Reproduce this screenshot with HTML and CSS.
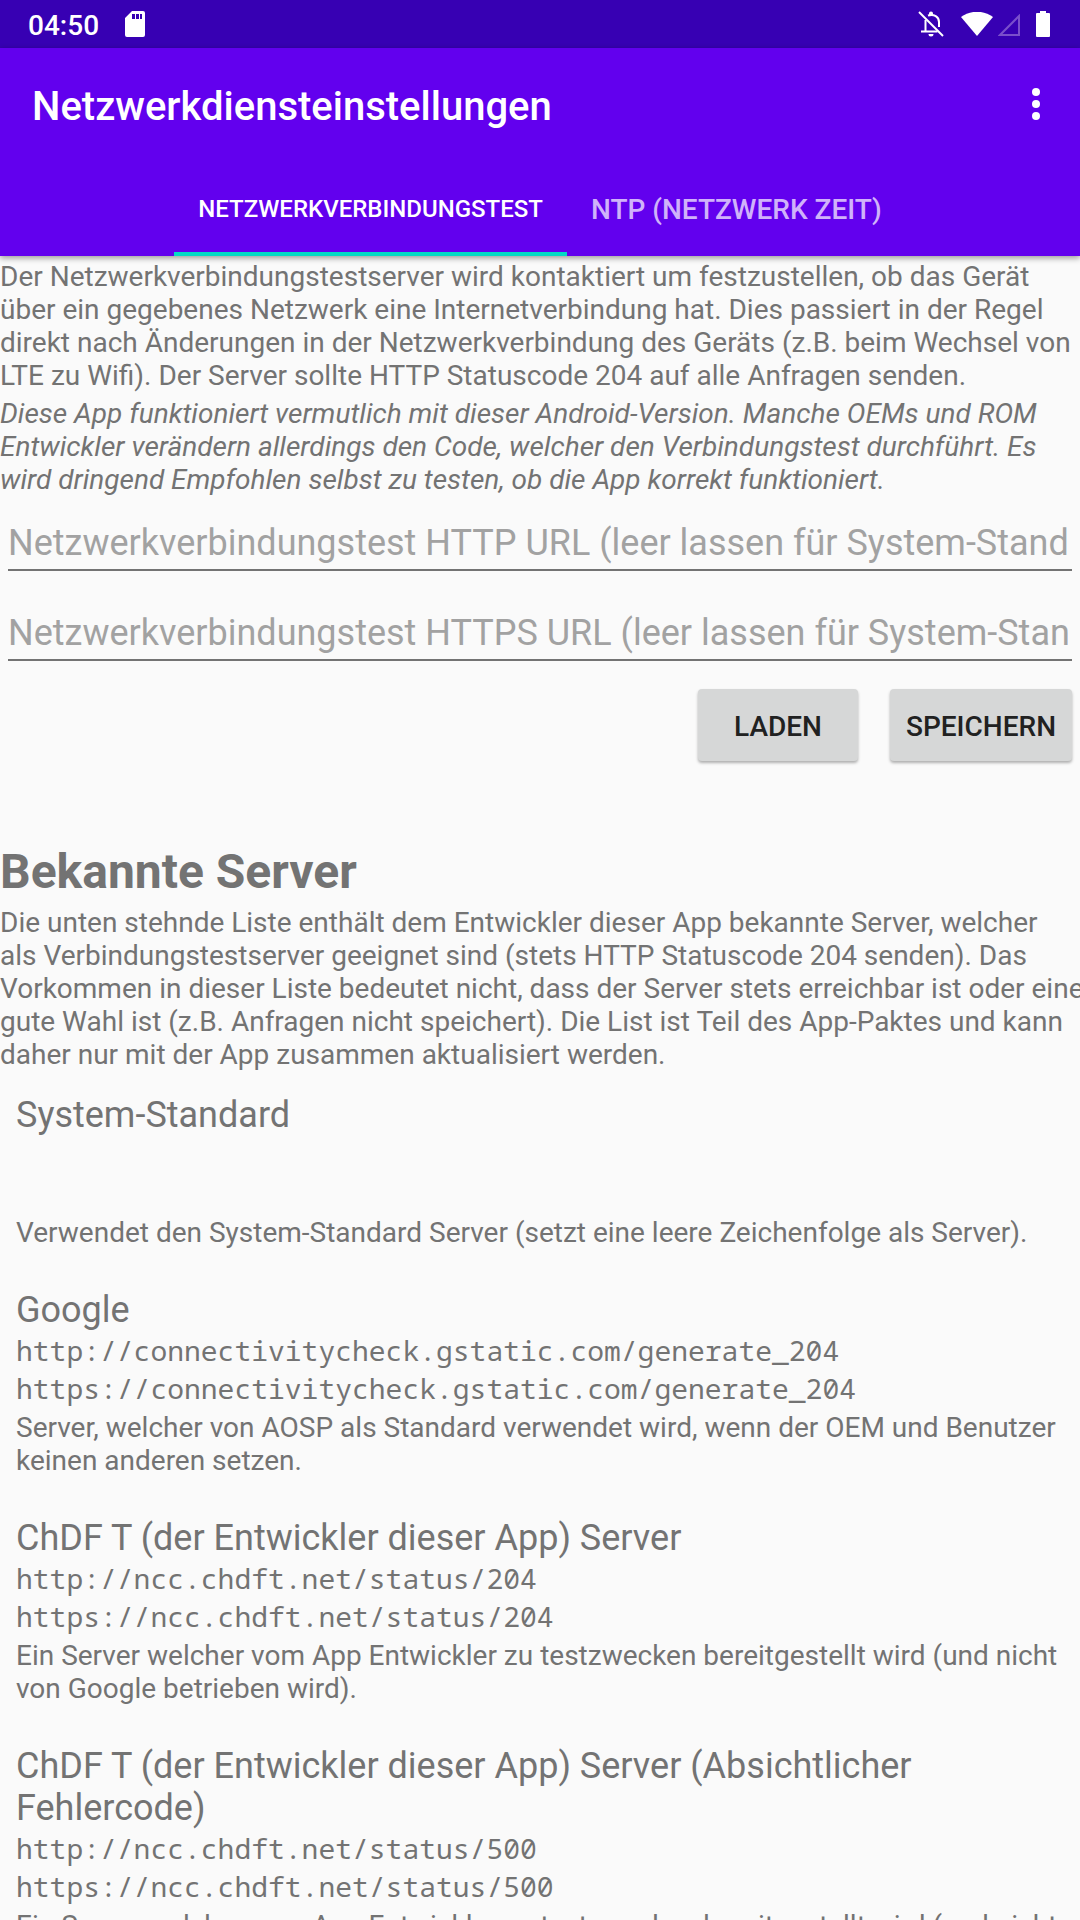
FILE: index.html
```html
<!DOCTYPE html>
<html lang="de">
<head>
<meta charset="utf-8">
<meta name="viewport" content="width=device-width, initial-scale=1">
<title>Netzwerkdiensteinstellungen</title>
<link rel="stylesheet" href="styles.css">
</head>
<body>
<div class="screen">
  <div class="status-bar">
    <span class="clock">04:50</span>
    <svg class="sd-icon" viewBox="0 0 20 26"><path fill="#fff" fill-rule="evenodd" d="M7 0H18Q20 0 20 2V24Q20 26 18 26H2Q0 26 0 24V7ZM7 3V8H10V3ZM11 3V8H14V3ZM15 3V8H17V3Z"/></svg>
    <div class="status-icons">
      <svg class="bell-icon" viewBox="0 0 26 26"><g fill="none" stroke="#fff" stroke-width="2"><path d="M1 1 25 25"/><path d="M7.500 9V20M3 20.500H19.500"/><path d="M10 4.500C16 2.500 21 6 21 11V16"/></g><path fill="#fff" d="M11 4V2.500A2 2 0 0 1 15 2.500V4ZM10.500 23H15.500A2.500 2.500 0 0 1 10.500 23Z"/></svg>
      <svg class="wifi-icon" viewBox="0 0 32 24"><path fill="#fff" d="M16 24 0 5C9-2 23-2 32 5Z"/></svg>
      <svg class="signal-icon" viewBox="0 0 22 22"><path fill="none" stroke="#7a4fcb" stroke-width="2" d="M21 2V21H2Z"/></svg>
      <svg class="battery-icon" viewBox="0 0 14 26"><path fill="#fff" d="M4 0H10V2H13Q14 2 14 3V25Q14 26 13 26H1Q0 26 0 25V3Q0 2 1 2H4Z"/></svg>
    </div>
  </div>
  <header class="app-bar">
    <div class="toolbar">
      <h1 class="title">Netzwerkdiensteinstellungen</h1>
      <button class="overflow" type="button" aria-label="Weitere Optionen"><svg viewBox="0 0 8 32"><g fill="#fff"><circle cx="4" cy="4" r="4"/><circle cx="4" cy="16" r="4"/><circle cx="4" cy="28" r="4"/></g></svg></button>
    </div>
    <nav class="tabs">
      <button class="tab tab-active" type="button">NETZWERKVERBINDUNGSTEST</button>
      <button class="tab" type="button">NTP (NETZWERK ZEIT)</button>
    </nav>
  </header>
  <main class="content">
    <p class="body-text">Der Netzwerkverbindungstestserver wird kontaktiert um festzustellen, ob das Gerät über ein gegebenes Netzwerk eine Internetverbindung hat. Dies passiert in der Regel direkt nach Änderungen in der Netzwerkverbindung des Geräts (z.B. beim Wechsel von LTE zu Wifi). Der Server sollte HTTP Statuscode 204 auf alle Anfragen senden.</p>
    <p class="body-text note">Diese App funktioniert vermutlich mit dieser Android-Version. Manche OEMs und ROM Entwickler verändern allerdings den Code, welcher den Verbindungstest durchführt. Es wird dringend Empfohlen selbst zu testen, ob die App korrekt funktioniert.</p>
    <form class="url-form">
      <input class="url-input" type="text" aria-label="HTTP URL" placeholder="Netzwerkverbindungstest HTTP URL (leer lassen für System-Standard)">
      <input class="url-input" type="text" aria-label="HTTPS URL" placeholder="Netzwerkverbindungstest HTTPS URL (leer lassen für System-Standard)">
      <div class="actions">
        <button class="action" type="button">LADEN</button>
        <button class="action" type="button">SPEICHERN</button>
      </div>
    </form>
    <h2 class="section-title">Bekannte Server</h2>
    <p class="body-text intro">Die unten stehnde Liste enthält dem Entwickler dieser App bekannte Server, welcher<br>als Verbindungstestserver geeignet sind (stets HTTP Statuscode 204 senden). Das Vorkommen in dieser Liste bedeutet nicht, dass der Server stets erreichbar ist oder eine gute Wahl ist (z.B. Anfragen nicht speichert). Die List ist Teil des App-Paktes und kann daher nur mit der App zusammen aktualisiert werden.</p>
    <ul class="servers">
      <li class="server">
        <h3 class="server-name">System-Standard</h3>
        <p class="url"></p>
        <p class="url"></p>
        <p class="body-text">Verwendet den System-Standard Server (setzt eine leere Zeichenfolge als Server).</p>
      </li>
      <li class="server">
        <h3 class="server-name">Google</h3>
        <p class="url">http://connectivitycheck.gstatic.com/generate_204</p>
        <p class="url">https://connectivitycheck.gstatic.com/generate_204</p>
        <p class="body-text">Server, welcher von AOSP als Standard verwendet wird, wenn der OEM und Benutzer keinen anderen setzen.</p>
      </li>
      <li class="server">
        <h3 class="server-name">ChDF T (der Entwickler dieser App) Server</h3>
        <p class="url">http://ncc.chdft.net/status/204</p>
        <p class="url">https://ncc.chdft.net/status/204</p>
        <p class="body-text">Ein Server welcher vom App Entwickler zu testzwecken bereitgestellt wird (und nicht von Google betrieben wird).</p>
      </li>
      <li class="server">
        <h3 class="server-name">ChDF T (der Entwickler dieser App) Server (Absichtlicher Fehlercode)</h3>
        <p class="url">http://ncc.chdft.net/status/500</p>
        <p class="url">https://ncc.chdft.net/status/500</p>
        <p class="body-text">Ein Server welcher vom App Entwickler zu testzwecken bereitgestellt wird (und nicht von Google betrieben wird).</p>
      </li>
    </ul>
  </main>
</div>
</body>
</html>
```
FILE: styles.css
```css
* { box-sizing: border-box; }
body { margin: 0; font-family: Roboto, sans-serif; color: #737373; background: #fafafa; }
h1, h2, h3, p, ul { margin: 0; padding: 0; }
button, input { font-family: inherit; border: 0; margin: 0; }
svg { display: block; }
.screen { height: 100vh; overflow: hidden; display: flex; flex-direction: column; }
.status-bar { flex: none; height: 48px; padding: 0 30px 0 28px; display: flex; align-items: center; background: #3700b3; color: #fff; }
.clock { padding-top: 3px; font-size: 28px; font-weight: 500; line-height: 32px; }
.sd-icon { width: 20px; height: 26px; margin-left: 26px; }
.status-icons { margin-left: auto; display: flex; align-items: center; }
.bell-icon { width: 26px; height: 26px; margin-right: 17px; }
.wifi-icon { width: 32px; height: 24px; margin-right: 5px; }
.signal-icon { width: 22px; height: 22px; margin: 2px 16px 0 0; }
.battery-icon { width: 14px; height: 26px; }
.app-bar { flex: none; position: relative; background: #6200ee; box-shadow: 0 2px 6px rgba(0,0,0,.4); }
.toolbar { height: 112px; padding: 0 24px 0 32px; display: flex; align-items: center; justify-content: space-between; }
.title { padding-top: 5px; font-size: 40px; line-height: 48px; font-weight: 500; color: #fff; }
.overflow { width: 40px; height: 48px; padding: 8px 16px; background: none; }
.overflow svg { width: 8px; height: 32px; }
.tabs { display: flex; justify-content: center; height: 96px; }
.tab { padding: 6px 24px 0; border-bottom: 4px solid transparent; background: none; color: #d0b2fa; font-size: 28px; font-weight: 500; }
.tab-active { color: #fff; font-size: 24px; border-bottom-color: #03dac5; }
.content { flex: 1; min-height: 0; overflow: hidden; padding-top: 4px; }
.body-text { font-size: 28px; line-height: 33px; }
.note { margin-top: 5px; font-style: italic; }
.url-form { padding: 0 8px; }
.url-input { display: block; width: 100%; height: 56px; margin-top: 19px; padding: 2px 4px 0 0; font-size: 36px; color: #212121; background: none; border-bottom: 2px solid #737373; }
.url-input + .url-input { margin-top: 34px; }
.url-input::placeholder { color: #a2a2a2; opacity: 1; }
.actions { margin-top: 28px; display: flex; justify-content: flex-end; gap: 32px; }
.action { min-width: 160px; height: 72px; padding: 2px 16px 0; border-radius: 4px; background: #d6d7d7; color: #212121; font-size: 28px; font-weight: 500; box-shadow: 0 2px 3px rgba(0,0,0,.3); }
.section-title { margin-top: 83px; font-size: 48px; line-height: 56px; font-weight: 700; }
.intro { margin: 6px -8px 0 0; }
.servers { list-style: none; padding: 0 16px; }
.server { padding: 23px 0 17px; }
.server-name { font-size: 36px; line-height: 42px; font-weight: 400; }
.url { height: 38px; font-family: "Noto Sans Mono", "DejaVu Sans Mono", monospace; font-size: 28px; line-height: 38px; }
.url + .body-text { margin-top: 4px; }
```
